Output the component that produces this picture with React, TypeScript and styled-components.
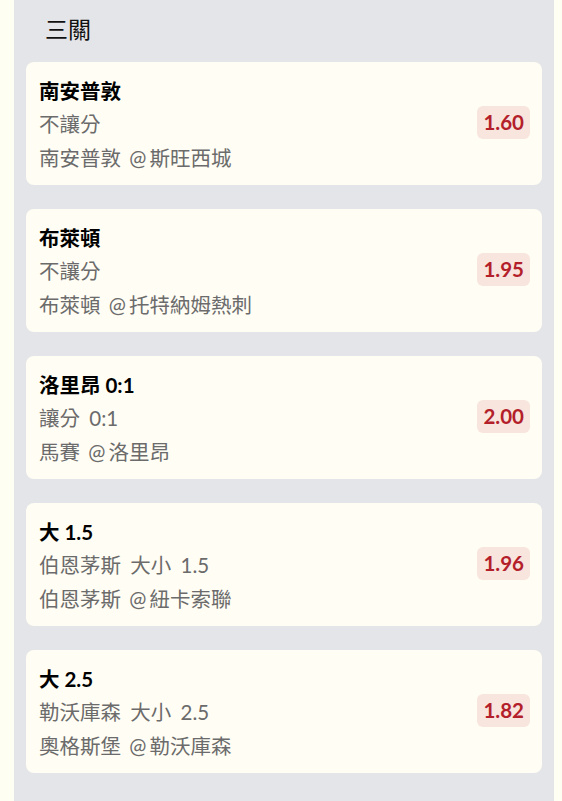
import React from "react";
import styled, { createGlobalStyle } from "styled-components";

const Global = createGlobalStyle`
  html, body { margin: 0; padding: 0; background: #fffef3; }
  body { font-family: "Lato", "Noto Sans CJK TC", sans-serif; }
  * { box-sizing: border-box; }
`;

const Panel = styled.div`
  margin-left: 14px;
  width: 540px;
  min-height: 801px;
  background: #e4e5e8;
  padding: 0 12px 26px;
`;

const Heading = styled.h1`
  margin: 0;
  padding: 14px 0 18px 19px;
  font-size: 23px;
  line-height: 30px;
  font-weight: 400;
  color: #111;
  font-family: "Lato", "Noto Sans CJK TC", sans-serif;
`;

const List = styled.div`
  display: flex;
  flex-direction: column;
  gap: 24px;
`;

const Card = styled.div`
  display: flex;
  align-items: center;
  justify-content: space-between;
  height: 123px;
  padding: 13px 12px 10px 13px;
  background: #fffdf4;
  border-radius: 8px;
`;

const Info = styled.div`
  display: flex;
  flex-direction: column;
`;

const Title = styled.div`
  font-size: 20.5px;
  line-height: 32px;
  font-weight: 700;
  color: #000;
`;

const Line = styled.div`
  font-size: 20.5px;
  line-height: 34px;
  font-weight: 400;
  word-spacing: 4px;
  color: #6b6b6b;
`;

const At = styled.span`
  margin: 0 3px 0 -1px;
`;

const Odds = styled.div`
  margin-bottom: 5px;
  padding: 4px 6px 4px;
  font-size: 20.5px;
  line-height: 25px;
  font-weight: 700;
  border-radius: 6px;
  background: #f8e5de;
  color: #b3202a;
`;

const bets = [
  { title: "南安普敦", market: "不讓分", home: "南安普敦", away: "斯旺西城", odds: "1.60" },
  { title: "布萊頓", market: "不讓分", home: "布萊頓", away: "托特納姆熱刺", odds: "1.95" },
  { title: "洛里昂 0:1", market: "讓分 0:1", home: "馬賽", away: "洛里昂", odds: "2.00" },
  { title: "大 1.5", market: "伯恩茅斯 大小 1.5", home: "伯恩茅斯", away: "紐卡索聯", odds: "1.96" },
  { title: "大 2.5", market: "勒沃庫森 大小 2.5", home: "奧格斯堡", away: "勒沃庫森", odds: "1.82" },
];

export default function App() {
  return (
    <>
      <Global />
      <Panel>
        <Heading>三關</Heading>
        <List>
          {bets.map((b) => (
            <Card key={b.home + b.away}>
              <Info>
                <Title>{b.title}</Title>
                <Line>{b.market}</Line>
                <Line>
                  {b.home} <At>@</At>
                  {b.away}
                </Line>
              </Info>
              <Odds>{b.odds}</Odds>
            </Card>
          ))}
        </List>
      </Panel>
    </>
  );
}
